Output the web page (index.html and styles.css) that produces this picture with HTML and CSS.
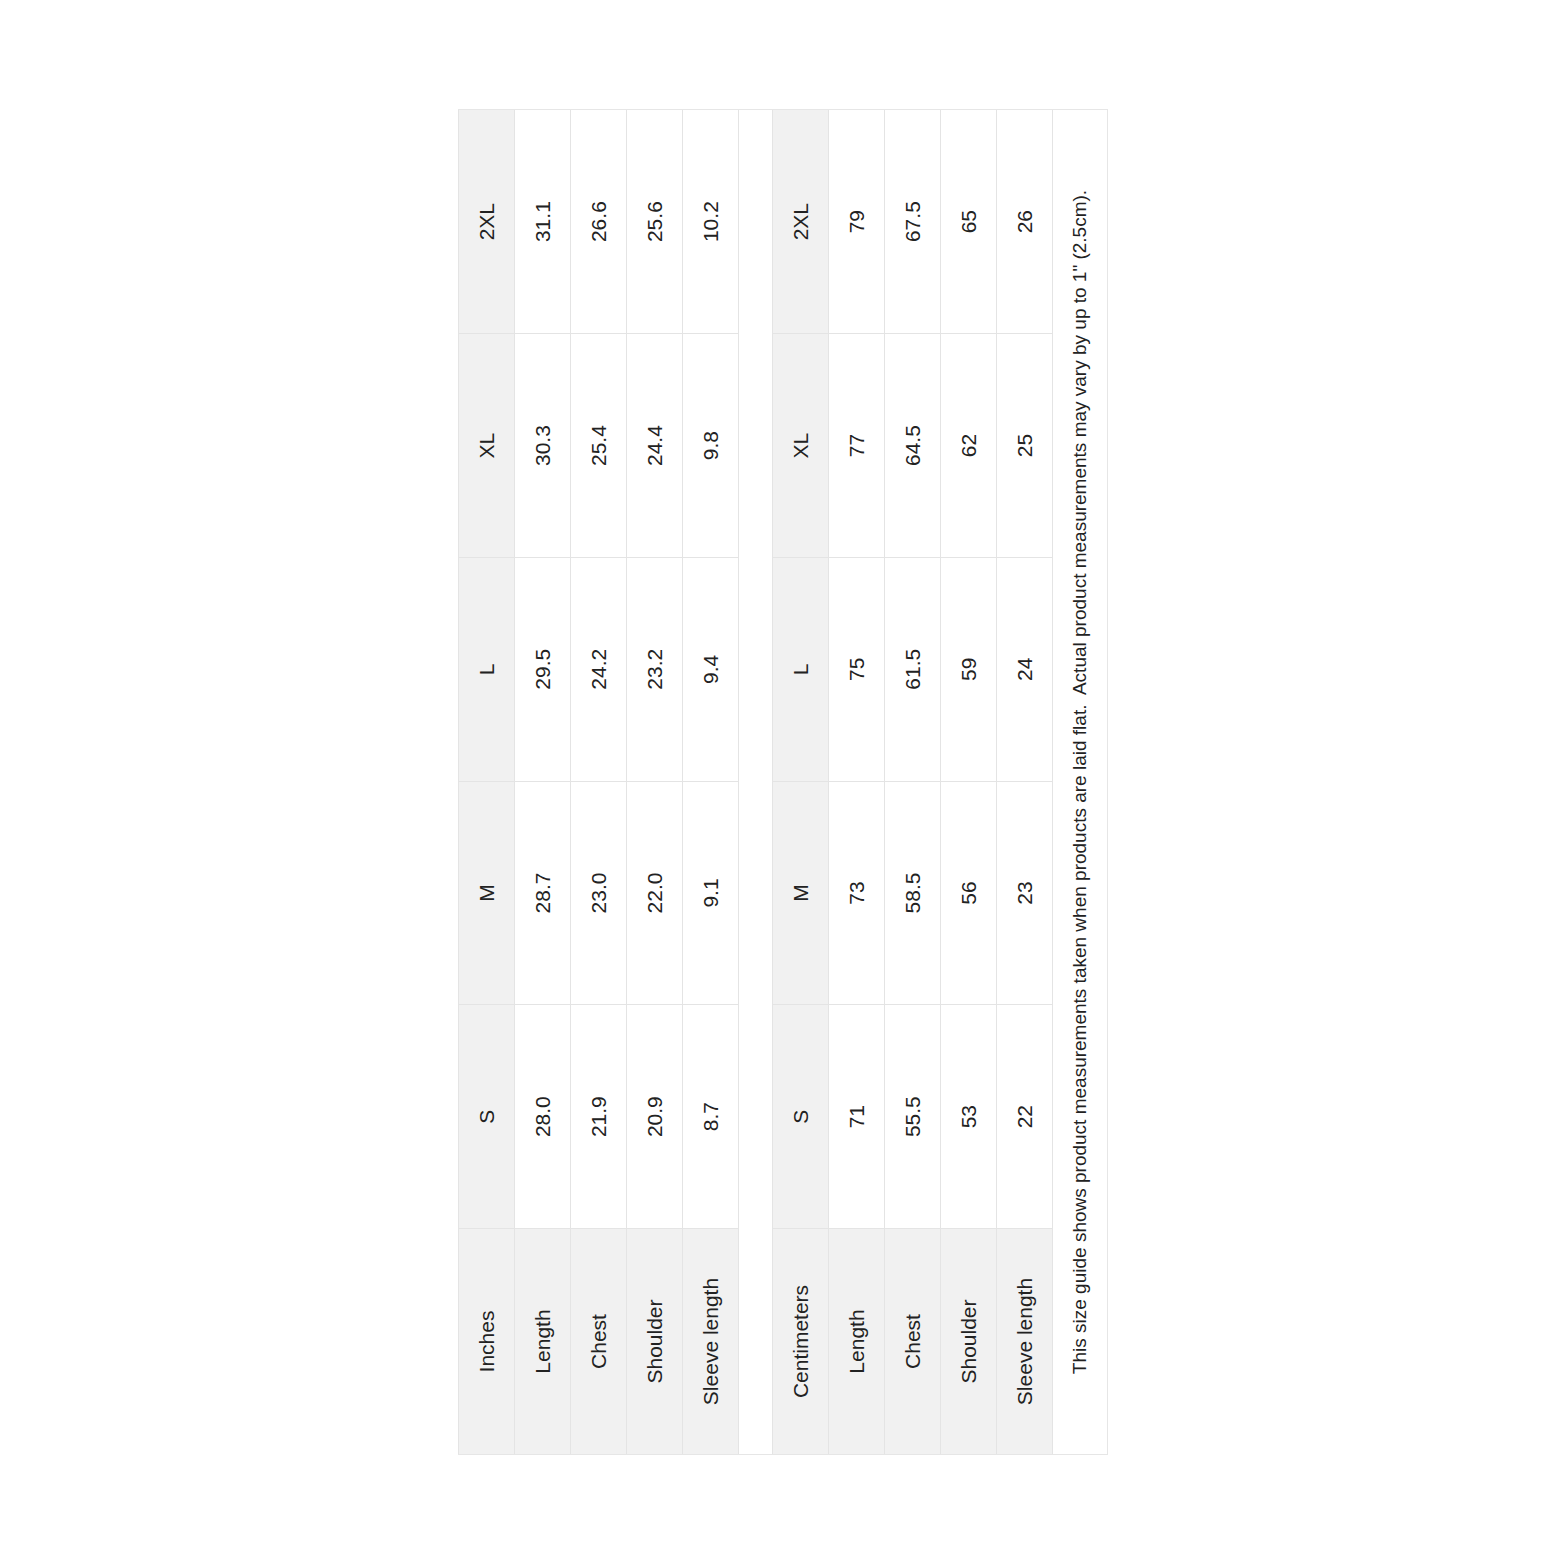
FILE: index.html
```html
<!DOCTYPE html>
<html lang="en">
<head>
<meta charset="utf-8">
<title>Size guide</title>
<link rel="stylesheet" href="styles.css">
</head>
<body>
<div class="stage">
  <div class="chart">
    <table class="size">
      <tr class="head"><th class="label">Inches</th><th>S</th><th>M</th><th>L</th><th>XL</th><th>2XL</th></tr>
      <tr><th class="label">Length</th><td>28.0</td><td>28.7</td><td>29.5</td><td>30.3</td><td>31.1</td></tr>
      <tr><th class="label">Chest</th><td>21.9</td><td>23.0</td><td>24.2</td><td>25.4</td><td>26.6</td></tr>
      <tr><th class="label">Shoulder</th><td>20.9</td><td>22.0</td><td>23.2</td><td>24.4</td><td>25.6</td></tr>
      <tr><th class="label">Sleeve length</th><td>8.7</td><td>9.1</td><td>9.4</td><td>9.8</td><td>10.2</td></tr>
    </table>
    <div class="spacer"></div>
    <table class="size">
      <tr class="head"><th class="label">Centimeters</th><th>S</th><th>M</th><th>L</th><th>XL</th><th>2XL</th></tr>
      <tr><th class="label">Length</th><td>71</td><td>73</td><td>75</td><td>77</td><td>79</td></tr>
      <tr><th class="label">Chest</th><td>55.5</td><td>58.5</td><td>61.5</td><td>64.5</td><td>67.5</td></tr>
      <tr><th class="label">Shoulder</th><td>53</td><td>56</td><td>59</td><td>62</td><td>65</td></tr>
      <tr><th class="label">Sleeve length</th><td>22</td><td>23</td><td>24</td><td>25</td><td>26</td></tr>
    </table>
    <p class="note">This size guide shows product measurements taken when products are laid flat.&nbsp; Actual product measurements may vary by up to 1" (2.5cm).</p>
  </div>
</div>
</body>
</html>
```
FILE: styles.css
```css
html, body {
  margin: 0;
  padding: 0;
  background: #ffffff;
}

.stage {
  width: 1563px;
  height: 1563px;
  display: flex;
  align-items: center;
  justify-content: center;
  padding-left: 3px;
  box-sizing: border-box;
}

.chart {
  width: 1346px;
  height: 650px;
  box-sizing: border-box;
  border-left: 1px solid #e6e6e6;
  border-right: 1px solid #e6e6e6;
  display: flex;
  flex-direction: column;
  transform: rotate(-90deg);
  font-family: "Liberation Sans", Arial, sans-serif;
  color: #222222;
  flex-shrink: 0;
}

.size {
  width: 100%;
  border-collapse: collapse;
  table-layout: fixed;
  flex-shrink: 0;
}

.size th,
.size td {
  height: 55px;
  padding: 0;
  border: 1px solid #e4e4e4;
  text-align: center;
  vertical-align: middle;
  font-size: 21px;
  font-weight: normal;
  background: #ffffff;
}

.size tr > :first-child { border-left: none; }
.size tr > :last-child { border-right: none; }

.size .label,
.size .head th {
  background: #f1f1f1;
}

.size .label {
  width: 225px;
}

.spacer {
  height: 33px;
  flex-shrink: 0;
}

.note {
  margin: 0;
  flex: 1 1 auto;
  box-sizing: border-box;
  border-bottom: 1px solid #e6e6e6;
  display: flex;
  align-items: center;
  justify-content: center;
  font-size: 19px;
  white-space: nowrap;
}
```
